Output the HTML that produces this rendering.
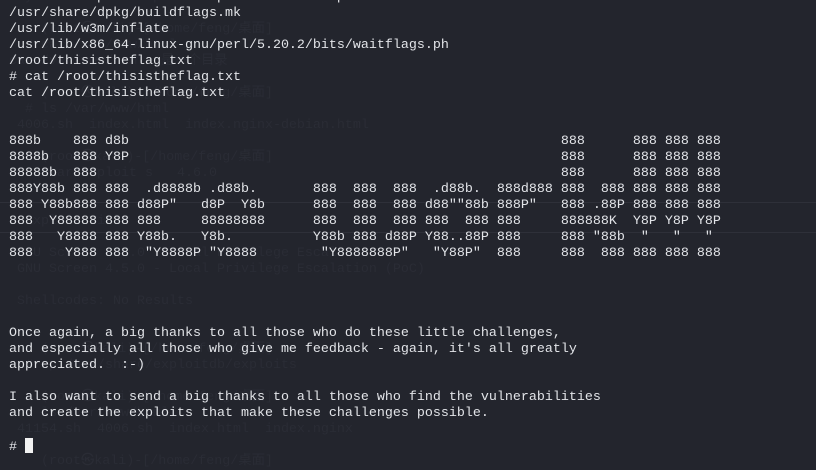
<!DOCTYPE html>
<html><head><meta charset="utf-8"><style>
html,body{margin:0;padding:0;width:816px;height:462px;overflow:hidden;background:#23252d;}
pre{position:absolute;left:9px;top:-10px;margin:0;font-family:"Liberation Mono","DejaVu Sans Mono",monospace;font-size:13.33px;line-height:16px;color:#e2e4e8;white-space:pre;}
.ghost{color:#2a2c35;z-index:0}
.main{z-index:2}
.hl{position:absolute;left:0;width:816px;height:1px;background:#2e3039;z-index:1}
.cur{display:inline-block;width:8px;height:15px;background:#f2f2f2;vertical-align:-3px}
</style></head><body>
<div class="hl" style="top:202px"></div>
<div class="hl" style="top:232px"></div>
<pre class="ghost">
 systemctl start apache2.service

    (root㉿kali)-[/home/feng/桌面]
  # cat /var/www/html
cat /var/www/html  是一个目录

    (root㉿kali)-[/home/feng/桌面]
  # ls /var/www/html
 4006.sh  index.html  index.nginx-debian.html

    (root㉿kali)-[/home/feng/桌面]
    searchsploit s   4.6.0


  Exploit Title

 GNU Screen 4.5.0 - Local Privilege Escalation
 GNU Screen 4.5.0 - Local Privilege Escalation (PoC)

 Shellcodes: No Results


    (root㉿kali)-[/home/feng/桌面]
  # cp /usr/share/exploitdb/exploits

    (root㉿kali)-[/home/feng/桌面]
  # ls /var/www/html
 41154.sh  4006.sh  index.html  index.nginx

    (root㉿kali)-[/home/feng/桌面]
</pre>
<pre class="main">/usr/share/perl/5.20.2/Compress/Raw/Zlib.pm
/usr/share/dpkg/buildflags.mk
/usr/lib/w3m/inflate
/usr/lib/x86_64-linux-gnu/perl/5.20.2/bits/waitflags.ph
/root/thisistheflag.txt
# cat /root/thisistheflag.txt
cat /root/thisistheflag.txt


888b    888 d8b                                                      888      888 888 888
8888b   888 Y8P                                                      888      888 888 888
88888b  888                                                          888      888 888 888
888Y88b 888 888  .d8888b .d88b.       888  888  888  .d88b.  888d888 888  888 888 888 888
888 Y88b888 888 d88P"   d8P  Y8b      888  888  888 d88""88b 888P"   888 .88P 888 888 888
888  Y88888 888 888     88888888      888  888  888 888  888 888     888888K  Y8P Y8P Y8P
888   Y8888 888 Y88b.   Y8b.          Y88b 888 d88P Y88..88P 888     888 "88b  "   "   "
888    Y888 888  "Y8888P "Y8888        "Y8888888P"   "Y88P"  888     888  888 888 888 888




Once again, a big thanks to all those who do these little challenges,
and especially all those who give me feedback - again, it's all greatly
appreciated.  :-)

I also want to send a big thanks to all those who find the vulnerabilities
and create the exploits that make these challenges possible.

# <span class="cur"></span></pre>
</body></html>
